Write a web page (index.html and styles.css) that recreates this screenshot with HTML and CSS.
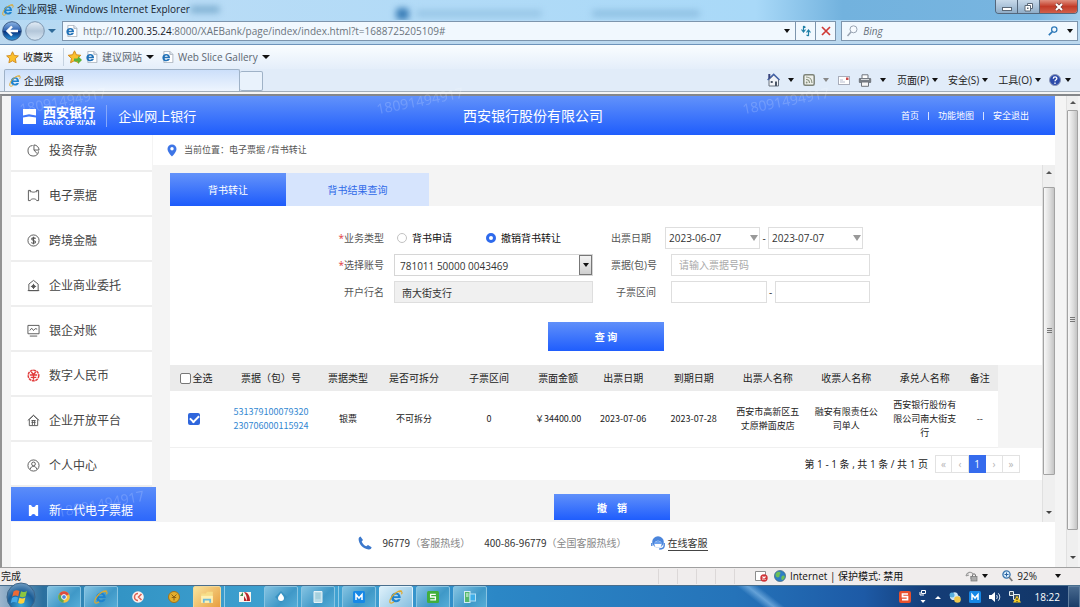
FILE: index.html
```html
<!DOCTYPE html>
<html lang="zh-CN">
<head>
<meta charset="utf-8">
<title>企业网银</title>
<link rel="stylesheet" href="styles.css">
</head>
<body>
<svg class="defs" aria-hidden="true">
  <defs>
    <linearGradient id="orb" x1="0" y1="0" x2="0" y2="1"><stop offset="0" stop-color="#8fb7e6"/><stop offset=".48" stop-color="#2f62b0"/><stop offset=".52" stop-color="#06307c"/><stop offset="1" stop-color="#2f9be0"/></linearGradient>
    <linearGradient id="orbGray" x1="0" y1="0" x2="0" y2="1"><stop offset="0" stop-color="#e4edf6"/><stop offset=".5" stop-color="#b3c6d9"/><stop offset="1" stop-color="#dbe9f5"/></linearGradient>
    <radialGradient id="startOrb" cx=".5" cy=".8" r=".8"><stop offset="0" stop-color="#39a9dc"/><stop offset=".6" stop-color="#1c5d96"/><stop offset="1" stop-color="#6f9cc2"/></radialGradient>
  </defs>
  <symbol id="ie" viewBox="0 0 16 16"><path d="M13.4 9.2H5.6c.2 1.6 1.2 2.4 2.5 2.4 1 0 1.7-.4 2.1-1.1h3c-.8 2.3-2.700 3.500-5.200 3.500-3.400 0-5.600-2.200-5.600-5.400 0-3.300 2.300-5.600 5.600-5.600 3.400 0 5.500 2.300 5.400 6.200zM5.700 7.200h4.700c-.1-1.300-1-2.100-2.300-2.100s-2.200.8-2.400 2.100z" fill="#1e83cf"/><path d="M14.800 1.500C12.500-.2 6.500 3 3.300 7.500.800 11 .3 14.300 1.800 14.900c1 .4 2.600-.3 4-1.400M11.500 2.200c1.600-.8 3-.8 3.300.1.300.8-.1 1.800-.6 2.600" fill="none" stroke="#e0a92a" stroke-width="1.300"/></symbol>
  <symbol id="iepage" viewBox="0 0 16 16"><path d="M2.500.5h8l4 4v11h-12z" fill="#fff" stroke="#9aa4b0"/><path d="M10.500.5v4h4" fill="#dfe7f0" stroke="#9aa4b0"/><path d="M10.800 9.600H3.400c.3 1.400 1.200 2 2.300 2 .8 0 1.400-.3 1.800-.8h3c-.8 2-2.500 3-4.700 3C2.600 13.800.5 12 .5 8.900.5 5.900 2.600 4 5.600 4c3.300 0 5.300 2.100 5.200 5.600zM3.500 7.500h4.200C7.500 6.500 6.800 6 5.700 6s-1.900.5-2.200 1.500z" fill="#2172b8"/></symbol>
  <symbol id="mlogo" viewBox="0 0 12 12"><rect width="12" height="12" rx="1.500" fill="#1688e6"/><path d="M3 9V3.500l3 3.500 3-3.500V9" fill="none" stroke="#fff" stroke-width="1.500"/></symbol>
</svg>

<header class="browser">
  <div class="titlebar">
    <i class="smudge s1"></i><i class="smudge s2"></i><i class="smudge s3"></i><i class="smudge s4"></i>
    <svg class="i12"><use href="#ie"/></svg>
    <span class="wintitle">企业网银 - Windows Internet Explorer</span>
    <div class="winbtns">
      <button aria-label="最小化"><svg width="10" height="10" viewBox="0 0 10 10"><rect x=".5" y="5.500" width="9" height="3" fill="#fff" stroke="#5b6877"/></svg></button>
      <button aria-label="还原"><svg width="10" height="10" viewBox="0 0 10 10"><path d="M3.500 1.500h5v5h-5z" fill="#fff" stroke="#5b6877"/><path d="M1 3.500h5.500v5.500H1z" fill="#fff" stroke="#5b6877"/><path d="M3 5.500h1.500V7H3z" fill="#5b6877"/></svg></button>
      <button class="close" aria-label="关闭"><svg width="10" height="10" viewBox="0 0 10 10"><path d="M2 2l6 6M8 2L2 8" stroke="#7b3a35" stroke-width="3.400"/><path d="M2 2l6 6M8 2L2 8" stroke="#fff" stroke-width="2"/></svg></button>
    </div>
  </div>

  <div class="addressrow">
    <button class="plain" aria-label="后退"><svg width="20" height="20" viewBox="0 0 20 20"><circle cx="10" cy="10" r="9.300" fill="url(#orb)" stroke="#3b5a85"/><path d="M16 10H6M10 5.500L5.500 10l4.500 4.500" fill="none" stroke="#fff" stroke-width="2.400"/></svg></button>
    <button class="plain" aria-label="前进"><svg width="20" height="20" viewBox="0 0 20 20"><circle cx="10" cy="10" r="9.300" fill="url(#orbGray)" stroke="#7f97b0"/></svg></button>
    <i class="caret blue"></i>
    <div class="urlbox">
      <svg class="i12"><use href="#iepage"/></svg>
      <span class="url">http://<b>10.200.35.24</b>:8000/XAEBank/page/index/index.html?t=1688725205109#</span>
      <i class="caret"></i>
      <button class="cell" aria-label="刷新"><svg width="12" height="12" viewBox="0 0 12 12"><path d="M3.500 1v5.500M1.500 4.500l2 2.500 2-2.500M5.500 2.500L3.500 1M8.500 11V5.500M6.500 7.500l2-2.500 2 2.500M8.500 11l-2-1" fill="none" stroke="#1f7fa6" stroke-width="1.200"/></svg></button>
      <button class="cell" aria-label="停止"><svg width="10" height="10" viewBox="0 0 10 10"><path d="M1 1l8 8M9 1L1 9" stroke="#cf3a36" stroke-width="1.700"/></svg></button>
    </div>
    <div class="searchbox">
      <svg width="12" height="12" viewBox="0 0 12 12"><circle cx="7.500" cy="4.300" r="3.500" fill="#f7fbff" stroke="#98a3b2"/><path d="M5 7L1.500 11" stroke="#98a3b2" stroke-width="1.500"/></svg>
      <input type="text" placeholder="Bing" aria-label="Bing">
      <svg width="10" height="10" viewBox="0 0 12 12"><circle cx="7.500" cy="4.300" r="3.200" fill="none" stroke="#2e79b8" stroke-width="1.500"/><path d="M5 7L1 11" stroke="#2e79b8" stroke-width="2"/></svg>
      <i class="caret"></i>
    </div>
  </div>

  <div class="favrow">
    <svg width="13" height="13" viewBox="0 0 14 14"><path d="M7 .8l1.900 4 4.400.5-3.300 3 .9 4.400L7 10.600l-3.900 2.100.9-4.400-3.300-3 4.400-.5z" fill="#fbc02d" stroke="#d18a1d"/></svg>
    <span class="dark">收藏夹</span>
    <i class="vsep"></i>
    <svg width="14" height="14" viewBox="0 0 14 14"><path d="M6.500.8l1.900 4 4.400.5-3.300 3 .9 4.400-3.900-2.100-3.900 2.100.9-4.400-3.300-3 4.400-.5z" fill="#fbc02d" stroke="#d18a1d"/><path d="M6 8.500h4V6l4 4-4 4v-2.500H6z" fill="#5fb336"/></svg>
    <svg class="i12"><use href="#iepage"/></svg><span>建议网站</span><i class="caret big"></i>
    <svg class="i12 second"><use href="#iepage"/></svg><span>Web Slice Gallery</span><i class="caret big"></i>
  </div>

  <div class="tabrow">
    <div class="btab"><svg class="i12"><use href="#ie"/></svg><span>企业网银</span></div>
    <div class="newtab"></div>
    <div class="cmdbar">
      <svg width="13" height="14" viewBox="0 0 13 14"><path d="M2 6.500v6.500h9.500V6.500L6.800 2z" fill="#f0f2f6" stroke="#68727f"/><path d="M.6 7L6.700 1.300 12.500 7" fill="none" stroke="#4563a8" stroke-width="1.500"/><path d="M1.300 1h2v4l-2 1z" fill="#39437c"/><path d="M3.700 8h2v2h-2zM8 8.500h2V13H8z" fill="#495464"/></svg><i class="caret"></i>
      <svg class="rss" width="12" height="12" viewBox="0 0 12 12"><rect x=".8" y=".8" width="10.400" height="10.400" rx="1.500" fill="#eef0ea" stroke="#7e8479" stroke-width="1.500"/><path d="M3 3c3.500 0 6 2.500 6 6M3 5.500C5 5.500 6.500 7 6.500 9" fill="none" stroke="#8b9380" stroke-width="1.200"/><circle cx="3.700" cy="8.500" r=".9" fill="#8b9380"/></svg><i class="caret dim"></i>
      <svg width="12" height="9" viewBox="0 0 12 9"><rect x=".5" y=".5" width="11" height="8" fill="#fff" stroke="#a9adba"/><path d="M8 1.500h2.500V4H8z" fill="#cc4a4a"/><path d="M2 6h5M2 4h3" stroke="#b9bfd0"/></svg>
      <svg class="printer" width="14" height="13" viewBox="0 0 14 13"><path d="M4 4V.8h6V4" fill="#fff" stroke="#70757c"/><rect x=".8" y="4" width="12.400" height="5" rx="1" fill="#777d84"/><path d="M3 5.500h8" stroke="#d7dadd"/><path d="M3.500 8h7v4.300h-7z" fill="#f6f6f6" stroke="#70757c"/></svg><i class="caret"></i>
      <button class="menu">页面(P)<i class="caret"></i></button>
      <button class="menu">安全(S)<i class="caret"></i></button>
      <button class="menu">工具(O)<i class="caret"></i></button>
      <button class="menu help" aria-label="帮助"><svg width="12" height="12" viewBox="0 0 12 12"><circle cx="6" cy="6" r="5.500" fill="#2c4bab" stroke="#8b97b8"/><path d="M4.300 4.700c0-2.500 3.600-2.300 3.500-.2C7.800 5.800 6 5.700 6 7.300M6 8.500V10" fill="none" stroke="#fff" stroke-width="1.300"/></svg><i class="caret"></i></button>
    </div>
  </div>
</header>

<div class="viewport">
  <div class="page">
    <header class="bankbar">
      <i class="wm w1">18091494917</i><i class="wm w2">18091494917</i><i class="wm w3">18091494917</i>
      <div class="brand">
        <svg width="13" height="16" viewBox="0 0 13 16"><path d="M0 1h13v6.500L6 6.300 0 7.500zM0 9.500L6 8.400l7 1.100V16H0z" fill="#fff"/></svg>
        <div class="logotext"><span class="cn">西安银行</span><span class="en">BANK OF XI'AN</span></div>
        <span class="product">企业网上银行</span>
      </div>
      <h1>西安银行股份有限公司</h1>
      <nav class="topnav"><a href="#">首页</a><i></i><a href="#">功能地图</a><i></i><a href="#">安全退出</a></nav>
    </header>

    <div class="middle">
      <nav class="side">
        <ul>
          <li><a href="#"><svg class="si" viewBox="0 0 14 14"><path d="M6 1.600A5.700 5.700 0 1 0 12.400 8M7.500 1v5.500H13A5.700 5.700 0 0 0 7.500 1zM7.500 6.500l3.500 4"/></svg>投资存款</a></li>
          <li><a href="#"><svg class="si" viewBox="0 0 14 14"><path d="M1.500 1.500h2c.5 2.500 6.500 2.500 7 0h2v11h-2c-.5-2.500-6.500-2.500-7 0h-2z M3.500 1.500v2M10.500 1.500v2"/></svg>电子票据</a></li>
          <li><a href="#"><svg class="si" viewBox="0 0 14 14"><circle cx="7" cy="7" r="6"/><path d="M9.200 5C8.500 3.800 5 3.800 5 5.500S9.200 6.800 9.200 8.600 5.300 10.300 4.800 9M7 3v8" stroke-width="1.200"/></svg>跨境金融</a></li>
          <li><a href="#"><svg class="si" viewBox="0 0 14 14"><path d="M2 12.500V5.500L7 1.500l5 4v7zM0.800 12.500h12.400"/><circle cx="7" cy="8" r="1.500" fill="#555"/><path d="M7 5.200v5.600M4.200 8h5.600"/></svg>企业商业委托</a></li>
          <li><a href="#"><svg class="si" viewBox="0 0 14 14"><path d="M1 1.500h12v9H1zM3 13h8M3 7l2-2.500L7 7l1.800-2L11 5.500"/></svg>银企对账</a></li>
          <li><a href="#"><svg class="si red" viewBox="0 0 14 14"><circle cx="7" cy="7" r="5.700" stroke-width="1.600" stroke-dasharray="3 .7"/><path d="M4.500 3L7 6l2.500-3M7 6v5.500M3 6.500h8M4 9h6" stroke-width="1.500"/></svg>数字人民币</a></li>
          <li><a href="#"><svg class="si" viewBox="0 0 14 14"><path d="M2.500 12.500V6L7 1.500 11.500 6v6.500zM.8 7L7 1.300 13.200 7M4.800 7h4.500M4.800 9h4.500M5.800 7v5M8.200 7v5" /></svg>企业开放平台</a></li>
          <li><a href="#"><svg class="si" viewBox="0 0 14 14"><circle cx="7" cy="7" r="6"/><circle cx="7" cy="5.300" r="2"/><path d="M3.500 11c.3-4 6.700-4 7 0"/></svg>个人中心</a></li>
          <li class="active"><a href="#"><i class="wm w4">18091494917</i><svg class="si solid" viewBox="0 0 14 14"><path d="M2 1h2.500C5 4 9 4 9.500 1H12v12H9.500C9 10 5 10 4.500 13H2z"/></svg>新一代电子票据</a></li>
        </ul>
      </nav>

      <main>
        <div class="crumb">
          <svg width="10" height="13" viewBox="0 0 10 13"><path d="M5 .5a4.500 4.500 0 0 1 4.500 4.500C9.500 8 5 12.500 5 12.500S.5 8 .5 5A4.500 4.500 0 0 1 5 .5z" fill="#3d75e6"/><circle cx="5" cy="4.700" r="1.700" fill="#fff"/></svg>
          当前位置：电子票据 /背书转让
        </div>
        <div class="workarea">
          <div class="work">
            <div class="tabs"><button class="on">背书转让</button><button>背书结果查询</button></div>
            <section class="panel">
              <form>
                <div class="fields">
                  <div class="group left">
                    <div class="row"><span class="lab"><em>*</em>业务类型</span>
                      <div class="radios"><label><input type="radio" name="biz">背书申请</label><label><input type="radio" name="biz" checked>撤销背书转让</label></div></div>
                    <div class="row"><label class="lab" for="acct"><em>*</em>选择账号</label>
                      <div class="selwrap"><select id="acct"><option>781011 50000 0043469</option></select><span class="selbtn"><i class="caret"></i></span></div></div>
                    <div class="row"><label class="lab" for="branch">开户行名</label><input class="box" id="branch" value="南大街支行" readonly></div>
                  </div>
                  <div class="group right">
                    <div class="row dates"><label class="lab" for="d1">出票日期</label>
                      <div class="datewrap"><input class="box" id="d1" value="2023-06-07"><i class="tri"></i></div><span class="dash">-</span>
                      <div class="datewrap"><input class="box" aria-label="结束日期" value="2023-07-07"><i class="tri"></i></div></div>
                    <div class="row"><label class="lab" for="no">票据(包)号</label><input class="box" id="no" placeholder="请输入票据号码"></div>
                    <div class="row"><label class="lab" for="r1">子票区间</label><input class="box" id="r1"><span class="dash">-</span><input class="box" aria-label="子票区间止"></div>
                  </div>
                </div>
                <button type="button" class="primary">查 询</button>
              </form>
              <div class="tablewrap">
                <table>
                  <colgroup><col class="c52"><col class="c98"><col class="c56"><col class="c76"><col class="c74"><col class="c64"><col class="c66"><col class="c75"><col class="c73"><col class="c84"><col class="c73"><col class="c37"></colgroup>
                  <thead><tr><th><label class="all"><input type="checkbox">全选</label></th><th>票据（包）号</th><th>票据类型</th><th>是否可拆分</th><th>子票区间</th><th>票面金额</th><th>出票日期</th><th>到期日期</th><th>出票人名称</th><th>收票人名称</th><th>承兑人名称</th><th>备注</th></tr></thead>
                  <tbody><tr><td class="pick"><input type="checkbox" checked aria-label="选择票据"></td><td><a href="#">531379100079320<br>230706000115924</a></td><td>银票</td><td>不可拆分</td><td>0</td><td>￥34400.00</td><td>2023-07-06</td><td>2023-07-28</td><td>西安市高新区五<br>丈原擀面皮店</td><td>融安有限责任公<br>司单人</td><td>西安银行股份有<br>限公司南大街支<br>行</td><td>--</td></tr></tbody>
                </table>
              </div>
              <div class="pager"><span>第 1 - 1 条 , 共 1 条 / 共 1 页</span>
                <div class="pages"><button>«</button><button>‹</button><button class="cur">1</button><button>›</button><button>»</button></div></div>
            </section>
            <button class="primary revoke">撤　销</button>
          </div>
          <div class="scroll inner"><i class="caret up"></i><div class="thumb"><i class="grip"></i></div><i class="caret"></i></div>
        </div>
      </main>
    </div>

    <footer class="service">
      <svg width="14" height="14" viewBox="0 0 14 14"><path d="M2.500.5L5 4 3.700 5.500c.7 2 2.300 3.800 4.500 4.800L10 9l3.600 2.300c-.3 1.700-1.500 2.400-3 2.200C5 12.700.8 8 .6 3.200.6 1.700 1.300.9 2.500.5z" fill="#3b78cc"/></svg>
      <span class="tel">96779<small>（客服热线）</small></span>
      <span class="tel tel2">400-86-96779<small>（全国客服热线）</small></span>
      <svg width="14" height="14" viewBox="0 0 14 14"><circle cx="7" cy="6" r="5.800" fill="#4b85dc"/><circle cx="7" cy="8.300" r="3.500" fill="#fff"/><path d="M3 8c1-3 3-2 4-4 1 2 3.500 1 4 4" fill="#6ea2ee"/><path d="M.8 7v3M13.200 7v2.500c0 2-2 3.500-5 3.500" fill="none" stroke="#4b85dc" stroke-width="1.400"/></svg>
      <a href="#">在线客服</a>
    </footer>
  </div>
  <div class="scroll outer"><i class="caret up"></i><div class="thumb"><i class="grip"></i></div><i class="caret"></i></div>
</div>

<div class="statusbar">
  <span>完成</span>
  <div class="cells"><i></i><i></i><i></i><i></i><i></i></div>
  <svg width="13" height="12" viewBox="0 0 13 12"><path d="M.5 1.500h10v9H.5z" fill="#fff" stroke="#8d8d8d"/><circle cx="9" cy="8" r="3.700" fill="#cf3438"/><path d="M7.500 6.500l3 3M10.500 6.500l-3 3" stroke="#fff" stroke-width="1.200"/></svg>
  <svg class="globe" width="12" height="12" viewBox="0 0 12 12"><circle cx="6" cy="6" r="5.600" fill="#2f7ec4" stroke="#3a6174" stroke-width=".6"/><path d="M2 3c2-2 4-1.500 4.500-.5S5 5 5.500 6s-2 2-3 1S1 4.500 2 3zM8 6c1-1 3-.5 2.800 1S9 10.500 8 10 7 7 8 6z" fill="#6cbf58"/></svg>
  <span class="zone">Internet | 保护模式: 禁用</span>
  <svg width="13" height="12" viewBox="0 0 13 12"><path d="M1 6c1-4 5-5 7-2M1 6l3-1M6 6v3" fill="none" stroke="#9a9a9a" stroke-width="1.200"/><rect x="6" y="6.500" width="6" height="4.500" fill="#ababab" stroke="#777" stroke-width=".7"/><path d="M7.500 6.500V5c0-1.500 3-1.500 3 0v1.500" fill="none" stroke="#777"/></svg>
  <i class="caret"></i>
  <svg class="mag" width="11" height="12" viewBox="0 0 11 12"><circle cx="4.500" cy="4.500" r="3.600" fill="#d8ecfc" stroke="#3874ad" stroke-width="1.300"/><path d="M4.500 2.500v4M2.500 4.500h4" stroke="#2a62a0"/><path d="M7.200 7.200L10.300 11" stroke="#777" stroke-width="1.700"/></svg>
  <span>92%</span>
  <i class="caret last"></i>
</div>

<footer class="taskbar">
  <button class="start" aria-label="开始"><svg width="30" height="30" viewBox="0 0 30 30"><circle cx="15" cy="15" r="14" fill="url(#startOrb)" stroke="#3c6488"/><path d="M7.500 9.500c2-1.500 4-1.500 6-.5l-1.300 5.200c-2-1-4-1-6 .5z" fill="#ee6a35"/><path d="M15 9.300c2 1 4 1 6-.3l-1.300 5.300c-2 1.300-4 1.300-6 .3z" fill="#8cc63f"/><path d="M6 16c2-1.500 4-1.500 6-.5l-1.300 5.200c-2-1-4-1-6 .5z" fill="#45a8e8"/><path d="M13.400 15.800c2 1 4 1 6-.3l-1.300 5.300c-2 1.300-4 1.300-6 .3z" fill="#ffd23c"/></svg></button>
  <div class="tasks">
    <button class="t" aria-label="Chrome"><svg class="i12" viewBox="0 0 12 12"><circle cx="6" cy="6" r="5.800" fill="#f2c340"/><path d="M6 6L1 3.200A5.800 5.800 0 0 1 11 3.200z" fill="#dc4c3f"/><path d="M6 6L1 3.200A5.800 5.800 0 0 0 5.500 11.800z" fill="#57a85a"/><circle cx="6" cy="6" r="2.400" fill="#4c86dc" stroke="#fff"/></svg></button>
    <button class="t" aria-label="IE"><svg class="i14"><use href="#ie"/></svg></button>
    <button class="t flat" aria-label="工具"><svg class="i12" viewBox="0 0 12 12"><circle cx="6" cy="6" r="5.800" fill="#fff0ec"/><path d="M6 2.500a3.500 3.500 0 1 0 0 7M9.500 3L6.500 6l3 3" fill="none" stroke="#dc6254" stroke-width="1.500"/></svg></button>
    <button class="t flat" aria-label="证书"><svg class="i12" viewBox="0 0 12 12"><circle cx="6" cy="6" r="5.500" fill="#e3ae2c" stroke="#a2721b"/><path d="M3.500 3.500L6 6l2.500-2.500M6 6v3.500M3.800 6.500h4.400" fill="none" stroke="#906212"/></svg></button>
    <button class="t gold" aria-label="资源管理器"><svg width="14" height="14" viewBox="0 0 12 12"><path d="M1 3h4l1-1.500h5V11H1z" fill="#f6dd88"/><path d="M1 5h10v6H1z" fill="#fff0b1"/><path d="M2.500 11V7.500h7V11H8V9H4v2z" fill="#6fbad8"/></svg></button>
    <i class="tsep"></i>
    <button class="t flat" aria-label="阅读"><svg class="i12" viewBox="0 0 12 12"><path d="M0 1h12v10H0z" fill="#f9f5ed"/><path d="M5 1c4 0 6 4 6 9H8C8 6 7 3 5 1z" fill="#b82429"/><path d="M5 5l3 5H5z" fill="#b82429"/><path d="M1 5l3-4v4z" fill="#3c8c4a"/></svg></button>
    <button class="t" aria-label="下载"><svg class="i12" viewBox="0 0 12 12"><path d="M6 0l6 6-6 6-6-6z" fill="#3892c2"/><path d="M6 2c1 2 3 3 3 5a3 3 0 0 1-6 0c0-2 2-3 3-5z" fill="#fff"/></svg></button>
    <button class="t" aria-label="文档"><svg class="i12" viewBox="0 0 12 12"><path d="M2 .5h8v11H2z" fill="#b8dce8" stroke="#e6f2f6"/><path d="M3.500 3h5M3.500 5h5M3.500 7h5" stroke="#93c3d2"/></svg></button>
    <i class="tsep"></i>
    <button class="t" aria-label="M"><svg class="i12"><use href="#mlogo"/></svg></button>
    <button class="t lit" aria-label="企业网银"><svg class="i14"><use href="#ie"/></svg></button>
    <button class="t" aria-label="表格"><svg class="i12" viewBox="0 0 12 12"><rect width="12" height="12" rx="1.500" fill="#41ae3d"/><path d="M8.800 3.300H3.600V6h4.800v2.800H3.200" fill="none" stroke="#fff" stroke-width="1.300"/></svg></button>
    <button class="t" aria-label="设备"><svg class="i12" viewBox="0 0 12 12"><rect x=".5" y=".5" width="5.500" height="11" fill="#55b86b" stroke="#d0edf5"/><path d="M2 3h2.500M2 5h2.500" stroke="#fff"/><rect x="6" y="3" width="5.500" height="7" fill="#3eaee8" stroke="#b1e0f6"/></svg></button>
  </div>
  <div class="tray">
    <svg class="i12" viewBox="0 0 12 12"><rect width="12" height="12" rx="2" fill="#e9512d"/><path d="M9 3H3.500v2.700h5v3H3" fill="none" stroke="#fff" stroke-width="1.700"/></svg>
    <svg width="8" height="16" viewBox="0 0 8 16"><path d="M2.500 1.500h4v3h-4zM1 3v3h4" fill="none" stroke="#fff"/><path d="M1.500 11h5L4 14z" fill="#fff"/></svg>
    <i class="caret up white"></i>
    <svg class="i12" viewBox="0 0 12 12"><path d="M2 8a2.500 2.500 0 0 1 1-4.500C4 0 9 1 9 4.500c3 0 3 4 0 4.500H3z" fill="#cde8f6"/><circle cx="3" cy="4" r="2.500" fill="#58b0de"/><circle cx="8.500" cy="8.500" r="3.300" fill="#f0c94d"/></svg>
    <svg class="i12"><use href="#mlogo"/></svg>
    <svg class="i12" viewBox="0 0 12 12"><path d="M0 4h2.500L6 1v10L2.500 8H0z" fill="#fff"/><path d="M7.500 4c1 1 1 3 0 4M9.300 2.300c2 2 2 5.400 0 7.400" fill="none" stroke="#dce8f5"/></svg>
    <svg class="i12" viewBox="0 0 12 12"><path d="M.5.5h4v4h-4zM4.500 3.500h6v5h-6z" fill="#425463" stroke="#e3edf3"/><path d="M8 4.500l4 7H4z" fill="#f4cb23"/><path d="M8 7v2M8 10v1" stroke="#222"/></svg>
    <time>18:22</time>
    <button class="desk" aria-label="显示桌面"></button>
  </div>
</footer>
</body>
</html>
```

FILE: styles.css
```css
* { box-sizing: border-box; }
body {
  margin: 0; min-height: 100vh; display: flex; flex-direction: column;
  font-family: "Open Sans", "Noto Sans CJK SC", sans-serif; font-size: 10px; line-height: 14px;
  color: #333; background: #f4f4f4; overflow: hidden;
}
button, input, select { font: inherit; color: inherit; margin: 0; padding: 0; border: 0; background: none; border-radius: 0; min-width: 0; }
a { color: inherit; text-decoration: none; }
svg { flex: none; display: block; }
i, em { font-style: normal; }
.defs { position: absolute; width: 0; height: 0; }
.i12 { width: 12px; height: 12px; }
.i14 { width: 14px; height: 14px; }
.caret { flex: none; width: 0; height: 0; border: solid transparent; border-width: 4px 3px 0; border-top-color: #111; }
.caret.up { border-width: 0 3px 3px; border-bottom-color: #555; }
.caret.big, .caret.blue { border-width: 4px 4px 0; }
.caret.blue { border-top-color: #2f6a98; }
.caret.dim { border-top-color: #888; }
.caret.white { border-bottom-color: #fff; }

/* browser chrome */
.titlebar {
  position: relative; height: 20px; display: flex; align-items: center; gap: 3px; padding: 0 2px; overflow: hidden;
  background: linear-gradient(90deg, #9fcff0, #b9dcf6 16%, #a9d9f8 70%, #72b2de 78%, #78b5e0 96%, #a3cdea);
}
.wintitle { position: relative; color: #16222e; flex: 1; line-height: 18px; padding-bottom: 2px; }
.smudge { position: absolute; filter: blur(3px); border-radius: 4px; }
.s1 { left: 190px; top: 6px; width: 30px; height: 7px; background: #7fb0d2; }
.s2 { left: 396px; top: 8px; width: 13px; height: 12px; background: #3c7fb8; }
.s3 { left: 416px; top: 10px; width: 126px; height: 7px; background: #98c6e6; }
.s4 { left: 592px; top: 10px; width: 108px; height: 7px; background: #8fc0e2; }
.winbtns { align-self: flex-start; display: flex; height: 14px; border: 1px solid #54677c; border-top: 0; border-radius: 0 0 4px 4px; overflow: hidden; position: relative; }
.winbtns button { width: 22px; height: 13px; display: grid; place-items: center; background: linear-gradient(#c7d9ea, #8fadc8); border-right: 1px solid #54677c; }
.winbtns .close { width: 37px; border: 0; background: linear-gradient(#e0907f, #c23b28 50%, #d2604a); }
.addressrow { height: 25px; display: flex; align-items: center; gap: 3px; padding: 0 2px 2px; border-bottom: 1px solid #6d93ba; background: linear-gradient(#b6daf4, #bcd8ee); }
.plain { width: 20px; height: 20px; }
.urlbox, .searchbox { height: 20px; border: 1px solid #7d95ad; background: #f1f8fe; display: flex; align-items: center; gap: 5px; }
.urlbox { flex: 1; margin-left: 3px; padding-left: 3px; }
.url { flex: 1; color: #6b747d; font-size: 10px; white-space: nowrap; }
.url b { color: #16202a; font-weight: 400; }
.cell { width: 20px; height: 18px; border-left: 1px solid #7d95ad; display: grid; place-items: center; }
.cell + .cell { margin-left: -5px; }
.searchbox { width: 22%; margin-left: 2px; padding: 0 4px; }
.searchbox input { flex: 1; font-style: italic; outline: 0; }
.searchbox input::placeholder { color: #66707b; opacity: 1; }
.searchbox .caret { margin-left: 4px; }
.favrow { height: 24px; display: flex; align-items: center; gap: 4px; padding: 0 6px; background: linear-gradient(#fafdff, #e4eefa); color: #5c6570; white-space: nowrap; }
.favrow .dark { color: #222; }
.vsep { width: 1px; height: 18px; background: #c5d2e0; margin: 0 0 0 6px; }
.favrow .second { margin-left: 4px; }
.tabrow { height: 23px; display: flex; align-items: flex-end; padding-left: 4px; background: #e1ecf9; border-bottom: 1px solid #a3aeb9; }
.btab { width: 236px; height: 22px; border: 1px solid #9fb2c7; border-bottom: 0; border-radius: 2px 2px 0 0; background: linear-gradient(#ccdffa, #eef5fe); display: flex; align-items: center; gap: 3px; padding: 0 4px; color: #222; }
.newtab { width: 23px; height: 20px; border: 1px solid #9fb2c7; border-left: 0; border-radius: 2px; background: #e9f2fc; }
.cmdbar { flex: 1; align-self: stretch; display: flex; align-items: center; justify-content: flex-end; gap: 8px; padding-right: 9px; color: #222; }
.cmdbar > .caret { margin-right: 1px; }
.menu { display: flex; align-items: center; gap: 3px; white-space: nowrap; margin-left: 2px; }
.help { margin-left: 0; gap: 4px; }

/* web page */
.viewport { flex: 1; display: flex; background: #f4f4f4; border-top: 2px solid #85878a; border-left: 2px solid #939393; border-bottom: 1px solid #a0a0a0; padding: 0 2px 0 9px; margin-top: 2px; }
.page { flex: 1; min-width: 0; display: flex; flex-direction: column; margin-right: 11px; }
.bankbar { position: relative; height: 39px; display: grid; grid-template-columns: 1fr auto 1fr; align-items: center; color: #fff; background: linear-gradient(#6292fa, #1f5dfc); }
.brand { display: flex; align-items: center; padding-left: 12px; }
.logotext { display: flex; flex-direction: column; margin-left: 7px; padding-right: 11px; border-right: 1px solid #86a8fb; }
.cn { font: 700 13px/14px "Noto Sans CJK SC", sans-serif; }
.en { font: 700 7px/8px "Liberation Sans", sans-serif; }
.product { font-size: 13px; margin-left: 11px; line-height: 18px; }
.bankbar h1 { margin: 0; font-size: 14px; font-weight: 400; line-height: 20px; }
.topnav { justify-self: end; display: flex; align-items: center; gap: 9px; font-size: 9px; padding-right: 26px; }
.topnav i { width: 1px; height: 8px; background: #d5e1ff; }
.wm { position: absolute; font-size: 14px; font-weight: 400; color: #fff; opacity: .17; transform: rotate(-11deg); }
.w1 { left: 8px; top: -2px; }
.w2 { left: 35%; top: -2px; }
.w3 { left: 70%; top: -2px; }
.w4 { left: 46px; top: 8px; }

.middle { flex: 1; display: flex; min-height: 0; }
.side { position: relative; z-index: 1; width: 145px; height: 386px; overflow: hidden; }
.side ul { list-style: none; margin: -8px 0 0; padding: 0; }
.side li { height: 45px; margin-right: 4px; background: #fff; border-bottom: 2px solid #eee; }
.side a { position: relative; height: 45px; display: flex; align-items: center; gap: 9px; padding-left: 16px; padding-top: 2px; font-size: 12px; line-height: 18px; color: #444; }
.side .active { margin: 0; border: 0; background: linear-gradient(#5b8df9, #2a65fb 80%); }
.side .active a { color: #fff; }
.si { width: 13px; height: 13px; fill: none; stroke: #555; stroke-width: 1; }
.si.red { stroke: #e13b3b; }
.si.solid { fill: #fff; stroke: none; }

main { flex: 1; min-width: 0; display: flex; flex-direction: column; margin-left: -3px; }
.crumb { height: 30px; background: #fff; display: flex; align-items: center; gap: 7px; padding-left: 14px; font-size: 9px; color: #555; }
.workarea { flex: 1; display: flex; }
.work { flex: 1; min-width: 0; padding: 8px 0 0 17px; display: flex; flex-direction: column; }
.tabs { display: flex; height: 33px; }
.tabs button { width: 143px; background: #d6e4fd; color: #2f69e8; }
.tabs .on { width: 116px; color: #fff; background: linear-gradient(#6493fa, #1d5bfb); }
.panel { background: #fff; }
form { padding: 21px 4px 14px 0; display: flex; flex-direction: column; align-items: center; }
.fields { display: flex; gap: 18px; }
.group { display: flex; flex-direction: column; gap: 5px; }
.row { height: 22px; display: flex; align-items: center; }
.left { width: 255px; }
.right { width: 259px; }
.lab { color: #555; text-align: right; flex: none; white-space: nowrap; }
.left .lab { width: 46px; margin-right: 10px; }
.right .lab { width: 45px; margin-right: 15px; }
.right .dates .lab { width: 39px; }
.dates { padding-right: 7px; }
.lab em { color: #e23b3b; }
.radios { display: flex; gap: 34px; color: #111; padding-left: 3px; }
.radios label { display: flex; align-items: center; gap: 5px; }
input[type=radio] { appearance: none; width: 10px; height: 10px; border: 1px solid #c2c2c2; border-radius: 50%; }
input[type=radio]:checked { border: 3px solid #2e6aec; }
.box { flex: 1; width: 0; height: 22px; border: 1px solid #dedede; background: #fff; padding: 0 7px; outline: 0; }
.box[readonly] { background: #f0f0f0; }
.box::placeholder { color: #a9a9a9; }
.selwrap { flex: 1; display: flex; border: 1px solid #d6d6d6; height: 22px; }
.selwrap select { appearance: none; flex: 1; padding: 2px 5px 0; }
.selbtn { width: 13px; border: 1px solid #777; background: linear-gradient(#f3f3f3, #cfcfcf); display: grid; place-items: center; }
.datewrap { position: relative; flex: 1; display: flex; }
.datewrap .box { padding: 0 3px; }
.tri { position: absolute; right: 2px; top: 8px; border: 4px solid transparent; border-top: 6px solid #999; border-bottom: 0; }
.dash { width: 8px; text-align: center; }
.primary { width: 116px; height: 29px; color: #fff; font-weight: 600; background: linear-gradient(#6090fa, #1f5dfd); }
form .primary { margin: 19px 0 0 4px; }
.tablewrap { background: #f4f4f4; }
table { width: 95%; table-layout: fixed; border-collapse: collapse; text-align: center; color: #222; background: #fff; }
th { height: 26px; padding: 0; background: #ebebeb; font-weight: 400; white-space: nowrap; }
td { height: 56px; padding: 0; font: 9px/14px "Noto Sans CJK SC", sans-serif; border-bottom: 1px solid #f0f0f0; white-space: nowrap; }
td a { color: #3388d2; }
.c52 { width: 52px; } .c98 { width: 98px; } .c56 { width: 56px; } .c76 { width: 76px; } .c74 { width: 74px; } .c64 { width: 64px; }
.c66 { width: 66px; } .c75 { width: 75px; } .c73 { width: 73px; } .c84 { width: 84px; } .c37 { width: 37px; }
.all { display: flex; align-items: center; justify-content: center; gap: 2px; }
input[type=checkbox] { appearance: none; display: grid; place-items: center; width: 11px; height: 11px; border: 1px solid #777; border-radius: 2px; background: #fff; }
.pick input { width: 12px; height: 12px; margin: 0 auto 0 18px; border: 0; background: #2f66dc; }
.pick input::after { content: ""; width: 7px; height: 4px; border: solid #fff; border-width: 0 0 2px 2px; rotate: -45deg; margin-bottom: 2px; }
.pager { height: 32px; display: flex; align-items: center; justify-content: flex-end; gap: 7px; padding-right: 22px; color: #222; }
.pages { display: flex; }
.pages button { width: 17px; height: 18px; border: 1px solid #e2e2e2; border-left-width: 0; color: #b5b5b5; line-height: 12px; }
.pages button:first-child { border-left-width: 1px; }
.pages .cur { background: #356bed; border-color: #356bed; color: #fff; }
.revoke { align-self: center; height: 26px; margin: 14px 0 2px 12px; padding-top: 3px; }

.service { height: 45px; background: #fff; display: flex; align-items: center; justify-content: center; padding-bottom: 2px; }
.tel { font-family: "Noto Sans CJK SC", sans-serif; margin-left: 10px; }
.tel small { font-size: 10px; color: #888; }
.tel2 { margin: 0 24px 0 14px; }
.service a { margin-left: 3px; border-bottom: 1px solid #444; }

.scroll { width: 12px; display: flex; flex-direction: column; align-items: center; background: #efefef; border-left: 1px solid #e0e0e0; }
.scroll .caret { border-top-color: #444; border-top-width: 3px; }
.scroll .caret.up { border-top-width: 0; }
.thumb { width: 100%; flex: 1; border: 1px solid #a3a3a3; border-radius: 1px; background: linear-gradient(90deg, #f8f8f8, #dcdcdc 60%, #c4c4c4); display: grid; place-items: center; }
.grip { width: 5px; height: 5px; border-top: 1px solid #777; border-bottom: 1px solid #777; background: linear-gradient(transparent 1px, #777 1px 2px, transparent 2px); }
.inner { width: 13px; padding: 6px 0 8px; }
.inner .thumb { margin: 13px 0 36px; }
.outer { padding: 5px 0 8px; }
.outer .thumb { margin: 6px 0 26px; }

/* status bar and taskbar */
.statusbar { height: 17px; display: flex; align-items: center; gap: 4px; padding: 0 19px 0 1px; background: #f0eded; color: #222; white-space: nowrap; }
.cells { flex: 1; display: flex; justify-content: flex-end; gap: 18px; padding-right: 16px; }
.cells i { width: 1px; height: 15px; background: #dcd8d8; }
.globe { margin-left: 2px; }
.zone { margin-right: 58px; color: #111; }
.mag { margin-left: 10px; }
.statusbar .last { margin-left: 14px; }
.taskbar { height: 24px; display: flex; color: #fff; border-top: 1px solid #496e8d; background: linear-gradient(38deg, transparent 69%, #8fc3ee99 70%, transparent 71%), linear-gradient(90deg, #9cb5cd, #2b709f 4%, #3293c4 10%, #42a4d3 30%, #2b87c6 46%, #2573b9 68%, #1d5aa6 80%, #143d77 86%, #123565); }
.start { width: 30px; height: 30px; margin: -4px 11px 0 6px; position: relative; }
.tasks { display: flex; flex: 1; gap: 3px; }
.t { width: 34px; height: 23px; border: 1px solid #88c4e2; border-radius: 2px; background: linear-gradient(135deg, #84c3e2, #3f98c7 60%, #57aed8); display: grid; place-items: center; flex: none; }
.t.flat { border-color: transparent; background: none; width: 33px; }
.t.gold { width: 28px; border-color: #f0d79a; background: linear-gradient(135deg, #f9e49c, #e79c3d); }
.t.lit { background: linear-gradient(135deg, #dcf0fa, #87bfe0); border-color: #dff1fb; }
.tsep { width: 1px; background: #8fcbe8; }
.tray { display: flex; align-items: center; gap: 8px; }
.tray time { margin-left: 6px; }
.desk { width: 12px; height: 23px; border: 1px solid #5f7e9f; background: linear-gradient(#48698e, #183a66); }
```
